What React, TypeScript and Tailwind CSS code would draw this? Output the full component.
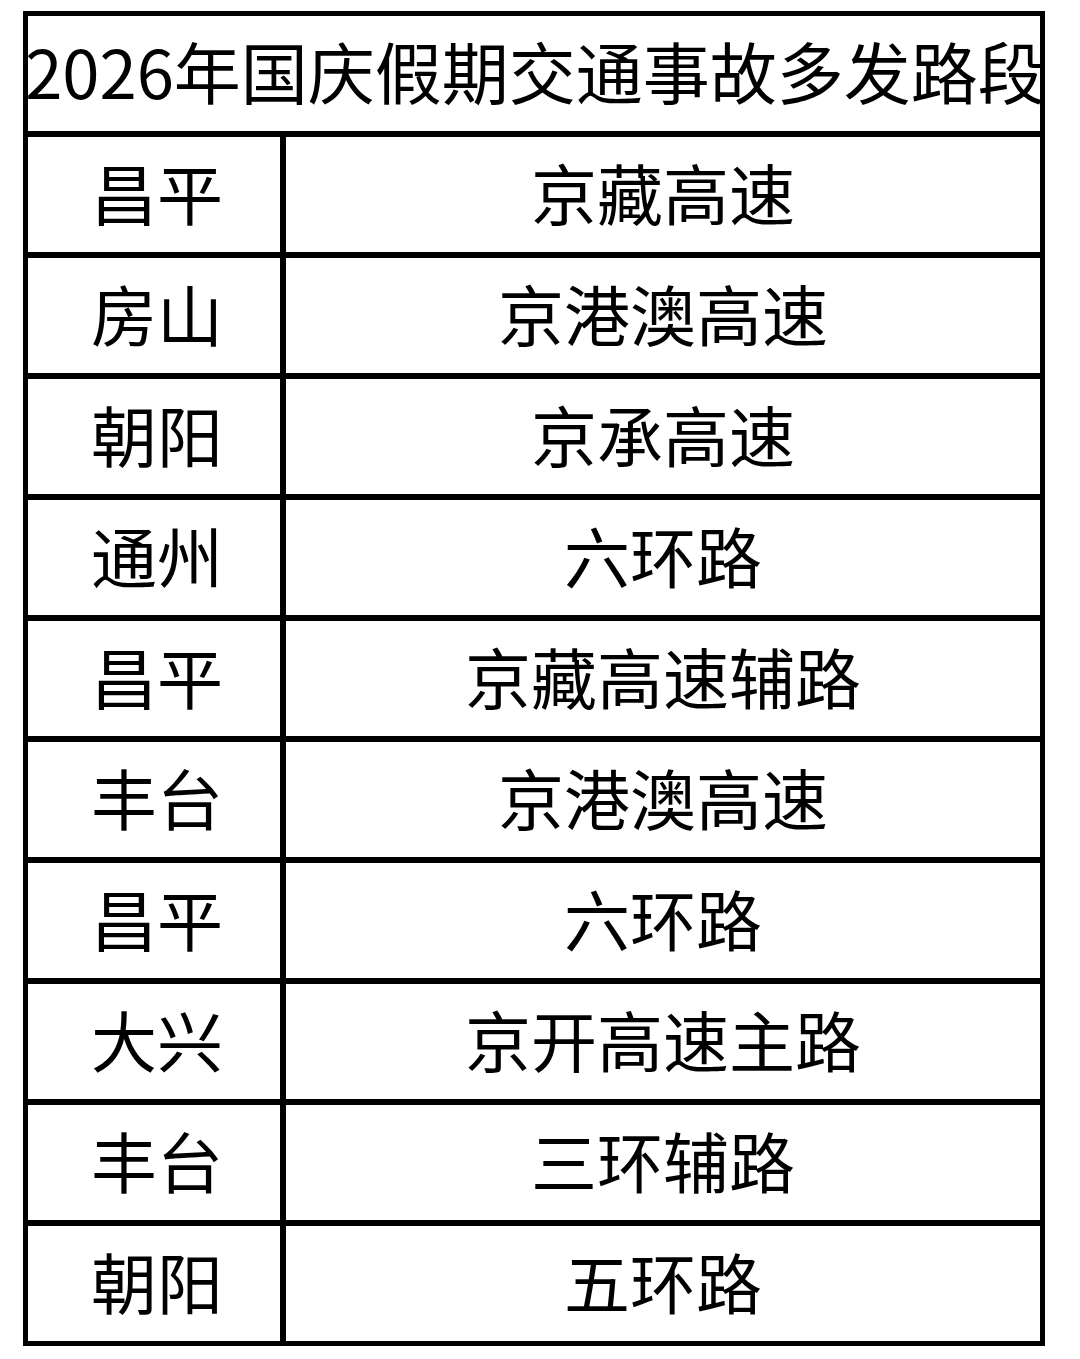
const rows: Array<[string, string]> = [
  ['昌平', '京藏高速'],
  ['房山', '京港澳高速'],
  ['朝阳', '京承高速'],
  ['通州', '六环路'],
  ['昌平', '京藏高速辅路'],
  ['丰台', '京港澳高速'],
  ['昌平', '六环路'],
  ['大兴', '京开高速主路'],
  ['丰台', '三环辅路'],
  ['朝阳', '五环路'],
];

export default function App() {
  return (
    <div
      className="w-[1080px] h-[1359px] bg-white pt-[11px] pl-[23px] text-black"
      style={{ fontFamily: '"Noto Sans CJK SC", "Noto Sans", sans-serif' }}
    >
      <div className="w-[1022px] border-[5px] border-black">
        {/* title */}
        <div className="h-[115px] flex items-center justify-center whitespace-nowrap text-[67px] leading-none pb-[8px] pl-[2px]">
          2026年国庆假期交通事故多发路段
        </div>

        {rows.map(([area, road], i) => (
          <div key={i} className="h-[121px] flex border-t-[6px] border-black">
            <div className="w-[258px] border-r-[6px] border-black flex items-center justify-center text-[66px] leading-none pb-[8px] pl-[6px]">
              {area}
            </div>
            <div className="flex-1 flex items-center justify-center text-[66px] leading-none pb-[8px]">
              {road}
            </div>
          </div>
        ))}
      </div>
    </div>
  );
}
